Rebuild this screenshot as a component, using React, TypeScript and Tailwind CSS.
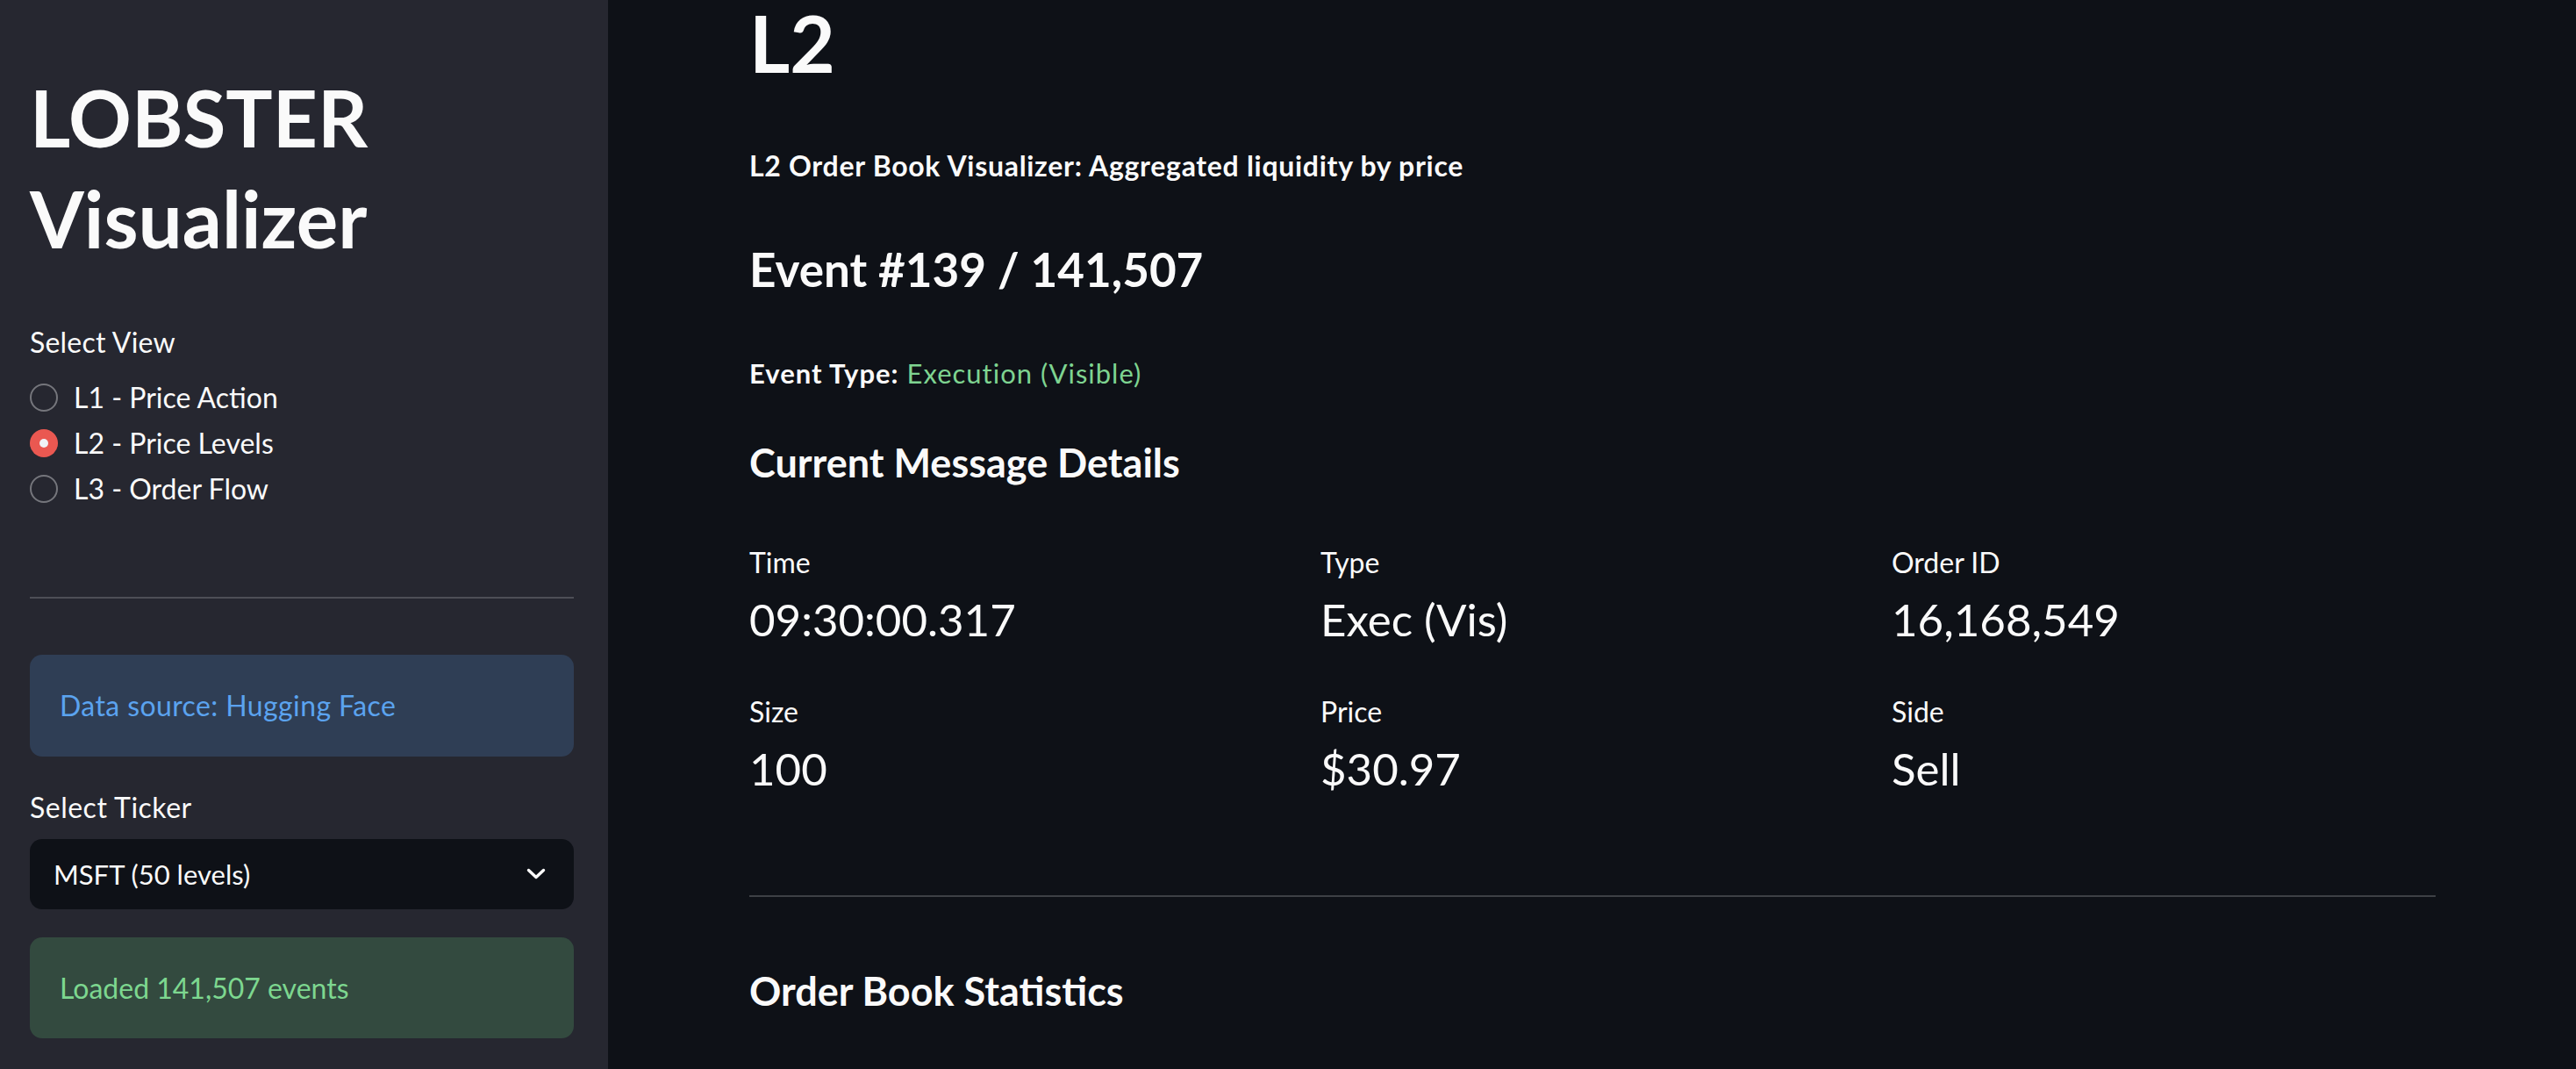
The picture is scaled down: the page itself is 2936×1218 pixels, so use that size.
const views = ["L1 - Price Action", "L2 - Price Levels", "L3 - Order Flow"];

const metrics = [
  { label: "Time", value: "09:30:00.317" },
  { label: "Type", value: "Exec (Vis)" },
  { label: "Order ID", value: "16,168,549" },
  { label: "Size", value: "100" },
  { label: "Price", value: "$30.97" },
  { label: "Side", value: "Sell" },
];

function Radio({ label, checked }: { label: string; checked: boolean }) {
  return (
    <div className="flex h-[52px] items-center gap-[18px]">
      {checked ? (
        <span className="flex h-[32px] w-[32px] items-center justify-center rounded-full bg-[#ea5851]">
          <span className="h-[10px] w-[10px] rounded-full bg-[#f0f2f6]" />
        </span>
      ) : (
        <span className="h-[32px] w-[32px] rounded-full border-2 border-[#75767c]" />
      )}
      <span className="text-[32px] leading-[40px] text-[#fafafa]">{label}</span>
    </div>
  );
}

function Sidebar() {
  return (
    <aside className="w-[693px] shrink-0 bg-[#262730] pl-[34px] pr-[39px]">
      <h1 className="mt-[76px] text-[89px] font-bold leading-[115px] text-[#fafafa]">
        LOBSTER
        <br />
        Visualizer
      </h1>
      <p className="mt-[64px] text-[32px] leading-[40px] tracking-[0.2px] text-[#fafafa]">Select View</p>
      <div className="mt-[17px]">
        {views.map((v, i) => (
          <Radio key={v} label={v} checked={i === 1} />
        ))}
      </div>
      <hr className="mt-[97px] border-0 border-t-2 border-[#4d4e56]" />
      <div className="mt-[64px] flex h-[116px] items-center rounded-[14px] bg-[#2f3e55] px-[34px]">
        <span className="text-[32px] leading-[40px] tracking-[0.4px] text-[#5ba3ef]">Data source: Hugging Face</span>
      </div>
      <p className="mt-[38px] text-[32px] leading-[40px] tracking-[0.5px] text-[#fafafa]">Select Ticker</p>
      <div className="mt-[16px] flex h-[80px] items-center justify-between rounded-[14px] bg-[#0e1117] pl-[27px] pr-[32px]">
        <span className="text-[31px] leading-[40px] text-[#fafafa]">MSFT (50 levels)</span>
        <svg width="22" height="14" viewBox="0 0 22 14" fill="none">
          <path d="M2.5 2.5 L11 10.5 L19.5 2.5" stroke="#fafafa" strokeWidth="3.4" strokeLinecap="round" strokeLinejoin="round" />
        </svg>
      </div>
      <div className="mt-[32px] flex h-[115px] items-center rounded-[14px] bg-[#334a3f] px-[34px]">
        <span className="text-[32px] leading-[40px] text-[#7dd78f]">Loaded 141,507 events</span>
      </div>
    </aside>
  );
}

export default function App() {
  return (
    <div className="flex h-[1218px] w-full overflow-hidden font-['Lato',sans-serif]">
      <Sidebar />
      <main className="flex-1 overflow-hidden bg-[#0e1117] pl-[161px] pr-[160px] text-[#fafafa]">
        <h1 className="text-[89px] font-bold leading-[97px]">L2</h1>
        <p className="mt-[72px] text-[32px] font-bold leading-[40px] tracking-[0.7px]">
          L2 Order Book Visualizer: Aggregated liquidity by price
        </p>
        <h3 className="mt-[66px] text-[53px] font-bold leading-[64px]">Event #139 / 141,507</h3>
        <p className="mt-[66px] text-[31px] leading-[40px] tracking-[1px]">
          <span className="font-bold">Event Type:</span>{" "}
          <span className="text-[#7ed491]">Execution (Visible)</span>
        </p>
        <h4 className="mt-[54px] text-[45px] font-bold leading-[56px]">Current Message Details</h4>
        <div className="mt-[66px] grid grid-cols-3 gap-x-[31px] gap-y-[53px]">
          {metrics.map((m) => (
            <div key={m.label}>
              <div className="text-[32px] leading-[40px]">{m.label}</div>
              <div className="mt-[13px] text-[51px] leading-[64px]">{m.value}</div>
            </div>
          ))}
        </div>
        <hr className="mt-[112px] border-0 border-t-2 border-[#3d4045]" />
        <h4 className="mt-[79px] text-[45px] font-bold leading-[56px]">Order Book Statistics</h4>
      </main>
    </div>
  );
}
